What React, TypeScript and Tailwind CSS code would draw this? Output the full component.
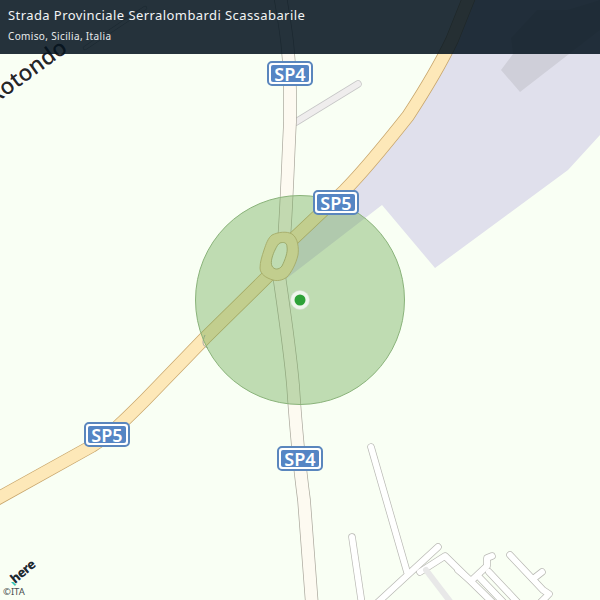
function Shield({ label, className }: { label: string; className: string }) {
  return (
    <div className={`absolute w-[46px] h-[25px] rounded-[5px] border-2 border-[#5a86bd] bg-white p-[2px] ${className}`}>
      <div className="w-full h-full rounded-[2px] bg-[#5585c4] flex items-center justify-center text-white text-[18px] font-semibold leading-none font-['Noto_Sans',sans-serif]">
        {label}
      </div>
    </div>
  );
}

function Road({ d, w, fill, casing }: { d: string; w: number; fill: string; casing: string }) {
  return (
    <g fill="none" strokeLinecap="round" strokeLinejoin="round">
      <path d={d} stroke={casing} strokeWidth={w + 1.4} />
      <path d={d} stroke={fill} strokeWidth={w} />
    </g>
  );
}

const sp4 =
  "M280 -5 C284 20 290 50 290 90 L290 122 C288 160 287 200 284 240 L279 275 C284 310 290 350 293 385 C296 430 300 470 304 500 L312 605";
const sp5 =
  "M-5 500 L92 446 C110 435 125 420 145 400 L205 338 L268 276 M292 240 L345 190 C365 170 385 145 408 116 C425 90 440 65 452 40 L470 -5";

const smallRoads = [
  "M371 447 L407 572",
  "M352 537 L362 605",
  "M438 547 L375 605",
  "M420 572 L445 556 L492 602",
  "M458 570 L471 581 L487 566 L487 558 L492 556",
  "M480 578 L506 605",
  "M489 572 L520 605",
  "M510 555 L543 590 L549 594 L538 605",
  "M533 579 L542 572",
];

export default function App() {
  return (
    <div className="relative w-[600px] h-[600px] overflow-hidden bg-[#f9fff4] font-['Noto_Sans',sans-serif]">
      <svg className="absolute inset-0" width="600" height="600" viewBox="0 0 600 600">
        <path
          d="M475 -5 L452 40 C440 65 425 90 408 116 C385 145 365 170 345 190 L294 240 L286 279 L382 205 L435 268 L568 170 L600 135 L600 -5 Z"
          fill="#e0e0ec"
        />
        <path d="M501 70 L520 92 L600 30 L600 0 L567 10 L537 10 L511 38 L513 54 Z" fill="#cfcfd9" />
        <Road d="M85 48 L145 8" w={3} fill="#f9fff4" casing="#b8b8b0" />
        <Road d="M296 122 L358 84" w={6} fill="#efeded" casing="#c6c6c6" />
        <g fill="none" strokeLinecap="round" strokeLinejoin="round">
          {smallRoads.map((d) => (
            <path key={d} d={d} stroke="#b9b9b4" strokeWidth={7.4} />
          ))}
          {smallRoads.map((d) => (
            <path key={d} d={d} stroke="#ffffff" strokeWidth={6} />
          ))}
          <path d="M426 570 L452 604" stroke="#e8e8e8" strokeWidth={6} />
        </g>
        <Road d={sp4} w={12} fill="#fdfaf1" casing="#aaa79c" />
        <Road d={sp5} w={12} fill="#fde8b8" casing="#c8a66c" />
        <path d="M205 335 C202 342 202 346 208 348" fill="none" stroke="#a9a9a9" strokeWidth="1" />
        <path
          d="M272 235 C278 232 287 231 292 234 C298 238 299 248 298 255 C296 264 291 273 287 277 C282 281 276 281 273 280 C266 278 260 274 260 268 C260 262 262 256 264 250 C266 244 268 238 272 235 Z"
          fill="#fde8b8"
          stroke="#c8a66c"
          strokeWidth="0.8"
        />
        <path
          d="M280 243 C283 242 287 242 287 247 C288 252 285 260 282 266 C279 270 274 270 272 266 C270 262 273 254 275 250 C277 246 278 244 280 243 Z"
          fill="#f9fff4"
          stroke="#b09a66"
          strokeWidth="0.8"
        />
        <text
          x="-6"
          y="105"
          transform="rotate(-36 -6 105)"
          fontSize="22.5"
          fontWeight="500"
          fontFamily="'Noto Sans', sans-serif"
          fill="#262626"
          stroke="#ffffff"
          strokeWidth="2"
          paintOrder="stroke"
        >
          Rotondo
        </text>
        <circle cx="300" cy="300" r="104.5" fill="#6aa84f" fillOpacity="0.4" stroke="#8ab37a" strokeWidth="1" />
        <circle cx="300" cy="300" r="9.5" fill="#ffffff" fillOpacity="0.75" stroke="#d8d8d8" strokeOpacity="0.5" />
        <circle cx="300" cy="300" r="5.5" fill="#2ea238" />
        <path d="M11 582 L18 582 L15 586 Z" fill="#35c4b0" />
        <text
          x="15"
          y="584"
          transform="rotate(-40 15 584)"
          fontSize="13"
          fontWeight="800"
          fontFamily="'Noto Sans', sans-serif"
          fill="#1d2a30"
          stroke="#ffffff"
          strokeWidth="1.5"
          paintOrder="stroke"
          letterSpacing="-0.5"
        >
          here
        </text>
      </svg>

      <span className="absolute left-[3px] top-[586px] text-[9.5px] leading-3 text-[#4a4f52]">©ITA</span>

      <Shield label="SP4" className="left-[267px] top-[61px]" />
      <Shield label="SP5" className="left-[313px] top-[190px]" />
      <Shield label="SP5" className="left-[84px] top-[422px]" />
      <Shield label="SP4" className="left-[277px] top-[446px]" />

      <div className="absolute inset-x-0 top-0 h-[54px] bg-[#05141f]/[0.87] flex flex-col pl-2 pt-[6px]">
        <div className="text-[13px] leading-[18px] tracking-[0.42px] text-[#f2f4f5]">
          Strada Provinciale Serralombardi Scassabarile
        </div>
        <div className="mt-[4px] text-[10px] leading-[16px] text-[#e8ebec] tracking-[0.35px]">Comiso, Sicilia, Italia</div>
      </div>
    </div>
  );
}
